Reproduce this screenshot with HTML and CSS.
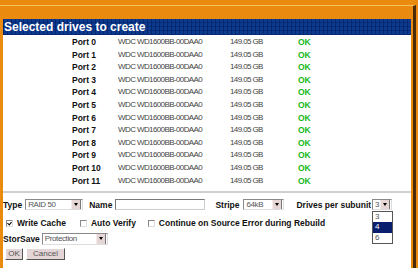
FILE: index.html
```html
<!DOCTYPE html>
<html lang="en">
<head>
    <meta charset="UTF-8">
    <title>Selected drives to create</title>
    <link rel="stylesheet" href="styles.css">
</head>
<body>
    <div class="frame">
        <div class="window">
            <h1 class="title">Selected drives to create</h1>
            <table class="drives">
                <tr><td class="port">Port 0</td><td class="model">WDC WD1600BB-00DAA0</td><td class="size">149.05 GB</td><td class="status">OK</td></tr>
                <tr><td class="port">Port 1</td><td class="model">WDC WD1600BB-00DAA0</td><td class="size">149.05 GB</td><td class="status">OK</td></tr>
                <tr><td class="port">Port 2</td><td class="model">WDC WD1600BB-00DAA0</td><td class="size">149.05 GB</td><td class="status">OK</td></tr>
                <tr><td class="port">Port 3</td><td class="model">WDC WD1600BB-00DAA0</td><td class="size">149.05 GB</td><td class="status">OK</td></tr>
                <tr><td class="port">Port 4</td><td class="model">WDC WD1600BB-00DAA0</td><td class="size">149.05 GB</td><td class="status">OK</td></tr>
                <tr><td class="port">Port 5</td><td class="model">WDC WD1600BB-00DAA0</td><td class="size">149.05 GB</td><td class="status">OK</td></tr>
                <tr><td class="port">Port 6</td><td class="model">WDC WD1600BB-00DAA0</td><td class="size">149.05 GB</td><td class="status">OK</td></tr>
                <tr><td class="port">Port 7</td><td class="model">WDC WD1600BB-00DAA0</td><td class="size">149.05 GB</td><td class="status">OK</td></tr>
                <tr><td class="port">Port 8</td><td class="model">WDC WD1600BB-00DAA0</td><td class="size">149.05 GB</td><td class="status">OK</td></tr>
                <tr><td class="port">Port 9</td><td class="model">WDC WD1600BB-00DAA0</td><td class="size">149.05 GB</td><td class="status">OK</td></tr>
                <tr><td class="port">Port 10</td><td class="model">WDC WD1600BB-00DAA0</td><td class="size">149.05 GB</td><td class="status">OK</td></tr>
                <tr><td class="port">Port 11</td><td class="model">WDC WD1600BB-00DAA0</td><td class="size">149.05 GB</td><td class="status">OK</td></tr>
            </table>
            <hr class="rule">
            <div class="form-row row-top">
                <span class="label lbl-type">Type</span>
                <span class="select sel-type"><span class="value">RAID 50</span><span class="arrow"></span></span>
                <span class="label lbl-name">Name</span>
                <span class="textbox"></span>
                <span class="label lbl-stripe">Stripe</span>
                <span class="select sel-stripe"><span class="value">64kB</span><span class="arrow"></span></span>
                <span class="label lbl-drives">Drives per subunit</span>
                <span class="select sel-drives open">
                    <span class="value">3</span><span class="arrow"></span>
                    <span class="listbox">
                        <span class="option">3</span>
                        <span class="option selected">4</span>
                        <span class="option">6</span>
                    </span>
                </span>
            </div>
            <div class="form-row row-checks">
                <span class="check checked"></span><span class="label">Write Cache</span>
                <span class="check chk-verify"></span><span class="label">Auto Verify</span>
                <span class="check chk-continue"></span><span class="label">Continue on Source Error during Rebuild</span>
            </div>
            <div class="form-row row-storsave">
                <span class="label">StorSave</span>
                <span class="select sel-storsave"><span class="value">Protection</span><span class="arrow"></span></span>
            </div>
            <div class="form-row row-buttons">
                <span class="button btn-ok">OK</span>
                <span class="button btn-cancel">Cancel</span>
            </div>
        </div>
    </div>
</body>
</html>
```

FILE: styles.css
```css
body {
    margin: 0;
    background-color: #ea8a0e;
    font-family: "Liberation Sans", Arial, sans-serif;
}
.frame {
    width: 416px;
    margin-top: 5px;
    padding-left: 3px;
    padding-right: 2px;
    box-sizing: border-box;
    border-top: 1px solid #f6c25a;
    border-right: 3px solid #4a2a08;
    border-bottom: 2px solid #4a2a08;
}
.window {
    position: relative;
    background-color: #fff;
    height: 256px;
}
.title {
    margin: 13px 0 0 0;
    padding: 0 0 0 1px;
    height: 16px;
    line-height: 16px;
    font-size: 12px;
    font-weight: bold;
    color: #fff;
    background-color: #0c3a8e;
    background-image:
        repeating-linear-gradient(90deg, rgba(0, 20, 80, 0.45) 0 1px, transparent 1px 4px),
        repeating-linear-gradient(0deg, rgba(0, 20, 80, 0.35) 0 1px, transparent 1px 4px);
}
.drives {
    border-collapse: collapse;
    margin-top: 1px;
}
.drives td {
    padding: 0;
    height: 12.6px;
    line-height: 12.6px;
    font-size: 8px;
    white-space: nowrap;
}
.port {
    width: 46px;
    padding-left: 69px !important;
    font-weight: bold;
    font-size: 8.5px !important;
    color: #111;
}
.model,
.size {
    color: #444;
    letter-spacing: -0.6px;
}
.model {
    width: 112px;
}
.size {
    width: 68px;
}
.status {
    color: #18b818;
    font-weight: bold;
    font-size: 8.5px !important;
}
.rule {
    margin: 4px 0 0 0;
    border: 0;
    height: 2px;
    background-color: #cfcfcf;
}
.form-row {
    display: flex;
    align-items: center;
    font-size: 8.5px;
}
.label {
    font-weight: bold;
    color: #111;
    white-space: nowrap;
}
.row-top {
    margin-top: 6px;
    height: 11px;
}
.lbl-type {
    margin-right: 3px;
}
.select {
    position: relative;
    display: flex;
    height: 11px;
    box-sizing: border-box;
    border: 1px solid #8a8a8a;
    border-right-color: #ddd;
    border-bottom-color: #ddd;
    background-color: #fff;
}
.select .value {
    flex: 1;
    padding-left: 2px;
    font-size: 8px;
    line-height: 9px;
    color: #555;
    letter-spacing: -0.4px;
}
.select .arrow {
    position: relative;
    width: 8px;
    margin-right: 1px;
    background-color: #e6d6d6;
    border-left: 1px solid #f4ecec;
    border-right: 1px solid #777;
}
.select .arrow::after {
    content: "";
    position: absolute;
    left: 2px;
    top: 3px;
    border-left: 2px solid transparent;
    border-right: 2px solid transparent;
    border-top: 3px solid #000;
}
.sel-type {
    width: 58px;
}
.lbl-name {
    margin-left: 6px;
    margin-right: 3px;
}
.textbox {
    width: 90px;
    height: 11px;
    box-sizing: border-box;
    border: 1px solid #777;
    border-right-color: #ccc;
    border-bottom-color: #ccc;
}
.lbl-stripe {
    margin-left: 10px;
    margin-right: 4px;
}
.sel-stripe {
    width: 41px;
}
.lbl-drives {
    margin-left: 12px;
    margin-right: 1px;
}
.sel-drives {
    width: 20px;
}
.listbox {
    position: absolute;
    top: 11px;
    left: -1px;
    width: 21px;
    display: flex;
    flex-direction: column;
    box-sizing: border-box;
    border: 1px solid #555;
    background-color: #fff;
}
.option {
    height: 10.3px;
    line-height: 10px;
    font-size: 8px;
    color: #555;
    padding-left: 2px;
}
.option.selected {
    background-color: #0a1e6e;
    color: #fff;
}
.row-checks {
    margin-top: 8px;
    height: 10px;
    padding-left: 3px;
}
.check {
    position: relative;
    width: 7px;
    height: 7px;
    box-sizing: border-box;
    border: 1px solid #888;
    border-right-color: #ddd;
    border-bottom-color: #ddd;
    margin-right: 4px;
}
.check.checked::after {
    content: "";
    position: absolute;
    left: 1px;
    top: 0;
    width: 2px;
    height: 3px;
    border-right: 1px solid #000;
    border-bottom: 1px solid #000;
    transform: rotate(40deg);
}
.chk-verify {
    margin-left: 14px;
}
.chk-continue {
    margin-left: 12px;
}
.row-storsave {
    margin-top: 5px;
    height: 12px;
}
.sel-storsave {
    width: 66px;
    height: 12px;
    margin-left: 2px;
}
.row-buttons {
    margin-top: 3px;
    padding-left: 2px;
    gap: 3px;
}
.button {
    height: 12px;
    box-sizing: border-box;
    border: 1px solid #fff;
    border-right-color: #555;
    border-bottom-color: #555;
    background-color: #e4d6d6;
    font-size: 8px;
    line-height: 10px;
    color: #555;
    text-align: center;
}
.btn-ok {
    width: 18px;
}
.btn-cancel {
    width: 39px;
}
```
